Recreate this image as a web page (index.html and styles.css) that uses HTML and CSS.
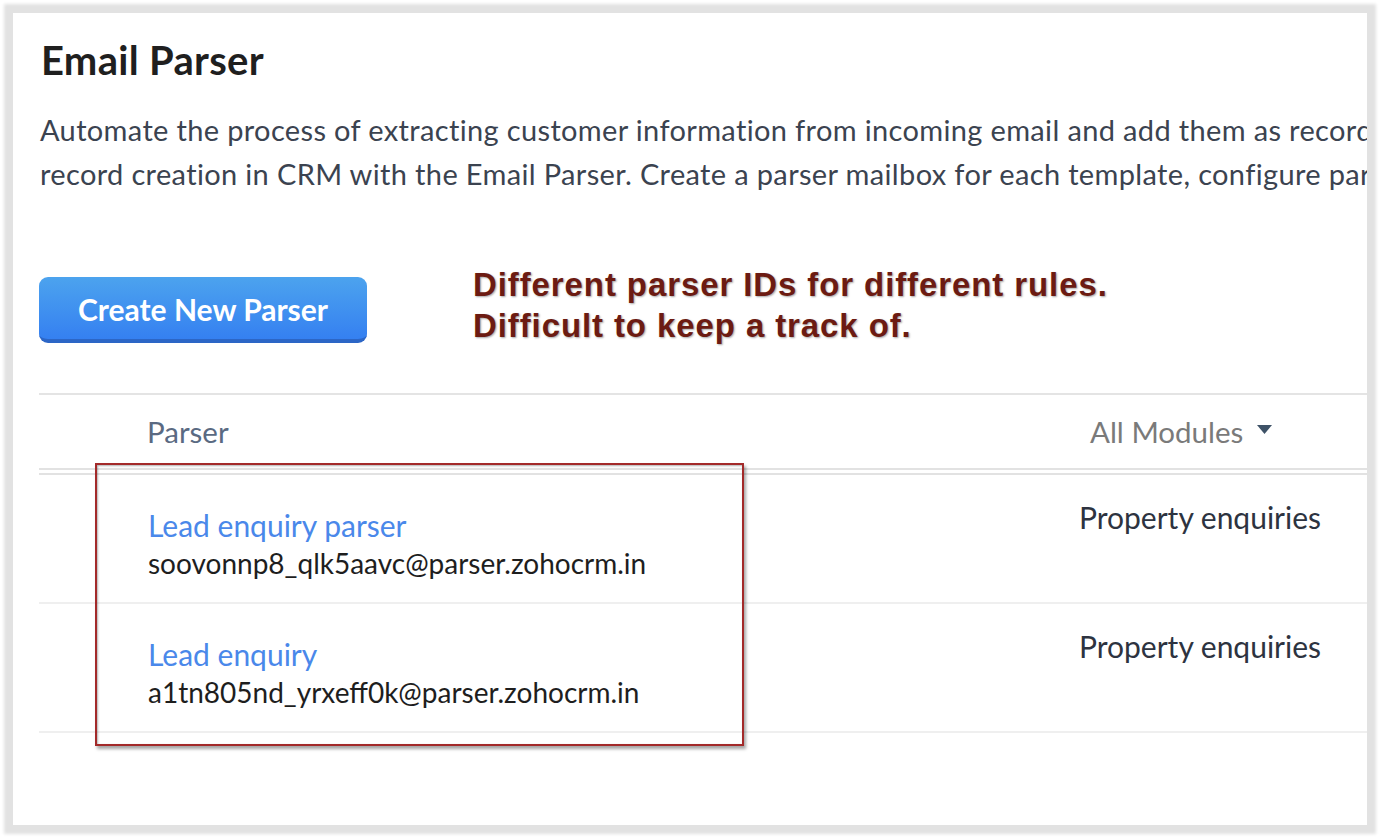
FILE: index.html
```html
<!DOCTYPE html>
<html lang="en">
<head>
    <meta charset="UTF-8">
    <meta name="viewport" content="width=device-width, initial-scale=1.0">
    <title>Email Parser</title>
    <link rel="stylesheet" href="styles.css">
</head>
<body>
    <div class="panel">
        <h1 class="title">Email Parser</h1>

        <p class="intro">
            Automate the process of extracting customer information from incoming email and add them as records<br>
            record creation in CRM with the Email Parser. Create a parser mailbox for each template, configure parsing
        </p>

        <div class="toolbar">
            <a href="#" class="button">Create New Parser</a>
            <div class="note">
                Different parser IDs for different rules.<br>
                Difficult to keep a track of.
            </div>
        </div>

        <div class="parser-table">
            <div class="row head">
                <div class="cell name-col">Parser</div>
                <div class="cell module-col">
                    All Modules
                    <svg class="caret" width="15" height="9" viewBox="0 0 15 9"><path d="M0 0h15L7.5 9z" fill="#3e5267"/></svg>
                </div>
            </div>
            <div class="row">
                <div class="cell name-col">
                    <a href="#" class="parser-name">Lead enquiry parser</a>
                    <div class="parser-mail">soovonnp8_qlk5aavc@parser.zohocrm.in</div>
                </div>
                <div class="cell module-col">Property enquiries</div>
            </div>
            <div class="row">
                <div class="cell name-col">
                    <a href="#" class="parser-name">Lead enquiry</a>
                    <div class="parser-mail">a1tn805nd_yrxeff0k@parser.zohocrm.in</div>
                </div>
                <div class="cell module-col">Property enquiries</div>
            </div>
        </div>

        <!-- red highlight box drawn over the list -->
        <div class="highlight"></div>
    </div>
</body>
</html>
```

FILE: styles.css
```css
* {
    padding: 0;
    margin: 0;
    box-sizing: border-box;
}

body {
    font-family: 'Lato', 'Open Sans', sans-serif;
    background-color: #ffffff;
    width: 1380px;
    height: 838px;
    padding: 13px;
    overflow: hidden;
}

.panel {
    position: relative;
    width: 1354px;
    height: 812px;
    background: #ffffff;
    box-shadow: 0 0 3px 9px #e2e2e2;
    padding: 25px 0 0 26px;
    overflow: hidden;
}

.title {
    font-size: 40px;
    font-weight: 700;
    line-height: 44px;
    letter-spacing: 0.3px;
    color: #1f1f1f;
    padding-left: 2px;
}

.intro {
    margin-top: 26px;
    font-size: 29px;
    line-height: 44px;
    letter-spacing: 0.35px;
    color: #3b4350;
    white-space: nowrap;
    padding-left: 1px;
}

.toolbar {
    display: flex;
    align-items: flex-start;
    margin-top: 68px;
}

.button {
    margin-top: 13px;
    width: 328px;
    height: 66px;
    display: flex;
    justify-content: center;
    align-items: center;
    border-radius: 9px;
    background: linear-gradient(#4ca3ee, #3580f1);
    border-bottom: 4px solid #2c66c6;
    color: #ffffff;
    font-size: 30px;
    font-weight: 700;
    text-decoration: none;
    padding-top: 2px;
}

.note {
    margin-left: 106px;
    font-family: 'Liberation Sans', Arial, sans-serif;
    font-weight: 700;
    font-size: 33px;
    line-height: 41px;
    letter-spacing: 0.9px;
    color: #6c1b12;
    text-shadow: 1px 1px 2px rgba(0, 0, 0, 0.35);
}

.parser-table {
    margin-top: 47px;
    border-top: 2px solid #e4e4e4;
}

.row {
    display: grid;
    grid-template-columns: 1040px 1fr;
    border-bottom: 2px solid #efefef;
    font-size: 30px;
    line-height: 38px;
}

.row.head {
    border-bottom: 7px double #e2e2e2;
}

.cell {
    padding: 31px 0 20px;
}

.name-col {
    padding-left: 108px;
}

.module-col {
    padding-top: 23px;
    color: #2d3340;
}

.head .cell {
    padding-top: 18px;
    padding-bottom: 17px;
    font-size: 29.5px;
}

.head .name-col {
    color: #5a6a82;
}

.head .module-col {
    padding-left: 11px;
    color: #7a7a7a;
    display: flex;
    align-items: center;
    gap: 14px;
}

.caret {
    margin-top: -6px;
}

.parser-name {
    display: block;
    color: #4a88ea;
    text-decoration: none;
    padding-left: 1px;
}

.parser-mail {
    font-size: 28px;
    color: #1e1e1e;
    padding-left: 1px;
}

.highlight {
    position: absolute;
    left: 82px;
    top: 450px;
    width: 649px;
    height: 283px;
    border: 2px solid #a32a2a;
    box-shadow: 2px 3px 3px rgba(0, 0, 0, 0.35), inset 1px 1px 2px rgba(0, 0, 0, 0.3);
    pointer-events: none;
}
```
